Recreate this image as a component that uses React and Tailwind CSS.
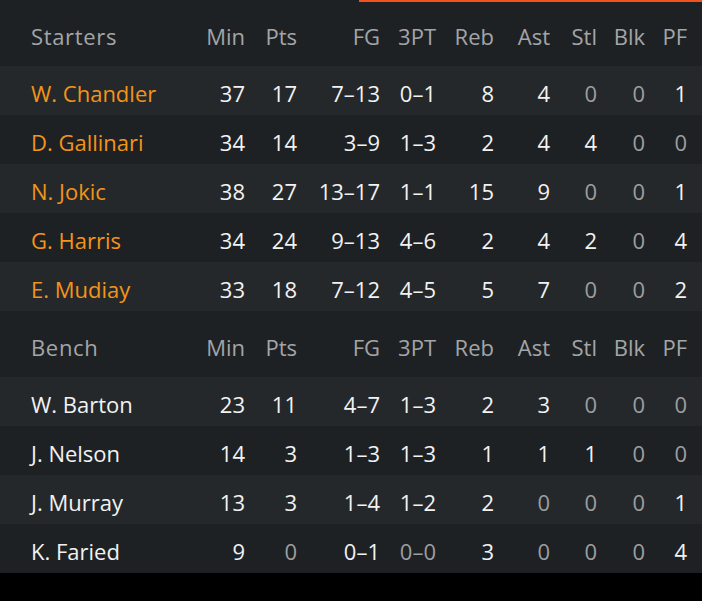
import React from "react"

const cols = ["Min", "Pts", "FG", "3PT", "Reb", "Ast", "Stl", "Blk", "PF"]

const starters = [
  ["W. Chandler", "37", "17", "7-13", "0-1", "8", "4", "0", "0", "1"],
  ["D. Gallinari", "34", "14", "3-9", "1-3", "2", "4", "4", "0", "0"],
  ["N. Jokic", "38", "27", "13-17", "1-1", "15", "9", "0", "0", "1"],
  ["G. Harris", "34", "24", "9-13", "4-6", "2", "4", "2", "0", "4"],
  ["E. Mudiay", "33", "18", "7-12", "4-5", "5", "7", "0", "0", "2"],
]

const bench = [
  ["W. Barton", "23", "11", "4-7", "1-3", "2", "3", "0", "0", "0"],
  ["J. Nelson", "14", "3", "1-3", "1-3", "1", "1", "1", "0", "0"],
  ["J. Murray", "13", "3", "1-4", "1-2", "2", "0", "0", "0", "1"],
  ["K. Faried", "9", "0", "0-1", "0-0", "3", "0", "0", "0", "4"],
]

const grid = "grid grid-cols-[162px_52px_52px_83px_56px_58px_56px_47px_48px_42px] pl-[31px] pr-[15px] items-center"

const isZero = (v) => v === "0" || v === "0-0"

const HeaderRow = ({ title }) => (
  <div className={`${grid} h-[66px] pt-[6px] bg-[#1e2124] text-[#a3a5a7]`}>
    <span className="tracking-[0.03em]">{title}</span>
    {cols.map((c) => (
      <span key={c} className="text-right">{c}</span>
    ))}
  </div>
)

const PlayerRow = ({ row, shaded, starter }) => {
  const [name, ...stats] = row
  return (
    <div className={`${grid} h-[49px] pt-[5px] ${shaded ? "bg-[#25282b]" : "bg-[#1e2124]"}`}>
      <span className={starter ? "text-[#f39419]" : "text-[#f2f2f2]"}>{name}</span>
      {stats.map((v, i) => (
        <span key={i} className={`text-right ${isZero(v) ? "text-[#9c9ea0]" : "text-[#f2f2f2]"}`}>
          {v.replace("-", "\u2013")}
        </span>
      ))}
    </div>
  )
}

export default function App() {
  return (
    <div className="w-[702px] h-[601px] bg-black overflow-hidden text-[22px] font-['Open_Sans',sans-serif]">
      <div className="flex h-[2px] bg-[#1e2124]">
        <div className="w-[359px]" />
        <div className="flex-1 bg-[#f4511e]" />
      </div>
      <div className="-mt-[2px]">
        <HeaderRow title="Starters" />
        {starters.map((r, i) => (
          <PlayerRow key={r[0]} row={r} shaded={i % 2 === 0} starter />
        ))}
        <HeaderRow title="Bench" />
        {bench.map((r, i) => (
          <PlayerRow key={r[0]} row={r} shaded={i % 2 === 0} />
        ))}
      </div>
    </div>
  )
}
